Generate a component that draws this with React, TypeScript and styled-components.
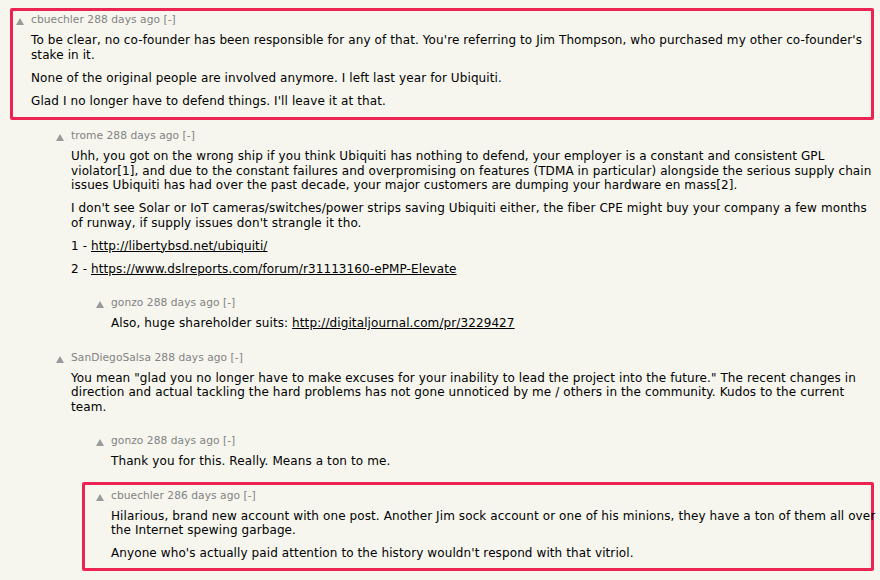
import React from "react";
import styled, { createGlobalStyle } from "styled-components";

const GlobalStyle = createGlobalStyle`
  html, body {
    margin: 0;
    padding: 0;
    background: #f6f6ef;
  }
  body {
    font-family: "DejaVu Sans", Verdana, Geneva, sans-serif;
    -webkit-font-smoothing: antialiased;
  }
`;

const Page = styled.div`
  padding: 8px 6px 0 0;
  width: 880px;
  height: 580px;
  box-sizing: border-box;
  overflow: hidden;
`;

const Highlight = styled.div<{ $left: number; $pad: string; $mb: number }>`
  margin-left: ${(p) => p.$left}px;
  margin-bottom: ${(p) => p.$mb}px;
  padding: ${(p) => p.$pad};
  border: 3px solid #ec2353;
  border-radius: 2px;
`;

const CommentRow = styled.div<{ $indent: number; $mb: number; $mr: number }>`
  display: flex;
  align-items: flex-start;
  padding-left: ${(p) => p.$indent}px;
  margin-bottom: ${(p) => p.$mb}px;
  margin-right: ${(p) => p.$mr}px;
`;

const Vote = styled.div`
  flex: none;
  width: 15px;
  display: flex;
  svg {
    display: block;
    margin-top: 5px;
  }
`;

const Main = styled.div`
  flex: 1;
  min-width: 0;
`;

const Head = styled.div`
  font-size: 10.67px;
  line-height: 14px;
  letter-spacing: 0.05px;
  color: #828282;
`;

const Text = styled.div`
  margin-top: 6px;
  font-size: 12px;
  line-height: 14.5px;
  letter-spacing: 0.1px;
  color: #000;
  p {
    margin: 0;
  }
  p + p {
    margin-top: 8.5px;
  }
`;

const Link = styled.a`
  color: #000;
  text-decoration: underline;
`;

const Arrow = () => (
  <svg width="8" height="7" viewBox="0 0 8 7">
    <polygon points="4,0 8,7 0,7" fill="#9a9a9a" />
  </svg>
);

type CommentProps = {
  user: string;
  age: string;
  indent: number;
  mb?: number;
  mr?: number;
  children: React.ReactNode;
};

const Comment = ({ user, age, indent, mb = 0, mr = 0, children }: CommentProps) => (
  <CommentRow $indent={indent} $mb={mb} $mr={mr}>
    <Vote>
      <Arrow />
    </Vote>
    <Main>
      <Head>
        {user} {age} [-]
      </Head>
      <Text>{children}</Text>
    </Main>
  </CommentRow>
);

export default function App() {
  return (
    <>
      <GlobalStyle />
      <Page>
        <Highlight $left={10} $pad="2px 0 9px" $mb={9}>
          <Comment user="cbuechler" age="288 days ago" indent={3} mr={-6}>
            <p>
              To be clear, no co-founder has been responsible for any of that. You're
              referring to Jim Thompson, who purchased my other co-founder's stake in it.
            </p>
            <p>None of the original people are involved anymore. I left last year for Ubiquiti.</p>
            <p>Glad I no longer have to defend things. I'll leave it at that.</p>
          </Comment>
        </Highlight>

        <Comment user="trome" age="288 days ago" indent={56} mb={20}>
          <p>
            Uhh, you got on the wrong ship if you think Ubiquiti has nothing to defend, your
            employer is a constant and consistent GPL violator[1], and due to the constant
            failures and overpromising on features (TDMA in particular) alongside the serious
            supply chain issues Ubiquiti has had over the past decade, your major customers are
            dumping your hardware en mass[2].
          </p>
          <p>
            I don't see Solar or IoT cameras/switches/power strips saving Ubiquiti either, the
            fiber CPE might buy your company a few months of runway, if supply issues don't
            strangle it tho.
          </p>
          <p>
            1 - <Link href="#">http://libertybsd.net/ubiquiti/</Link>
          </p>
          <p>
            2 - <Link href="#">https://www.dslreports.com/forum/r31113160-ePMP-Elevate</Link>
          </p>
        </Comment>

        <Comment user="gonzo" age="288 days ago" indent={96} mb={20}>
          <p>
            Also, huge shareholder suits:{" "}
            <Link href="#">http://digitaljournal.com/pr/3229427</Link>
          </p>
        </Comment>

        <Comment user="SanDiegoSalsa" age="288 days ago" indent={56} mb={20}>
          <p>
            You mean "glad you no longer have to make excuses for your inability to lead the
            project into the future." The recent changes in direction and actual tackling the
            hard problems has not gone unnoticed by me / others in the community. Kudos to the
            current team.
          </p>
        </Comment>

        <Comment user="gonzo" age="288 days ago" indent={96} mb={13}>
          <p>Thank you for this. Really. Means a ton to me.</p>
        </Comment>

        <Highlight $left={82} $pad="4px 0 7px" $mb={0}>
          <Comment user="cbuechler" age="286 days ago" indent={11} mr={-6}>
            <p>
              Hilarious, brand new account with one post. Another Jim sock account or one of his
              minions, they have a ton of them all over the Internet spewing garbage.
            </p>
            <p>Anyone who's actually paid attention to the history wouldn't respond with that vitriol.</p>
          </Comment>
        </Highlight>
      </Page>
    </>
  );
}
